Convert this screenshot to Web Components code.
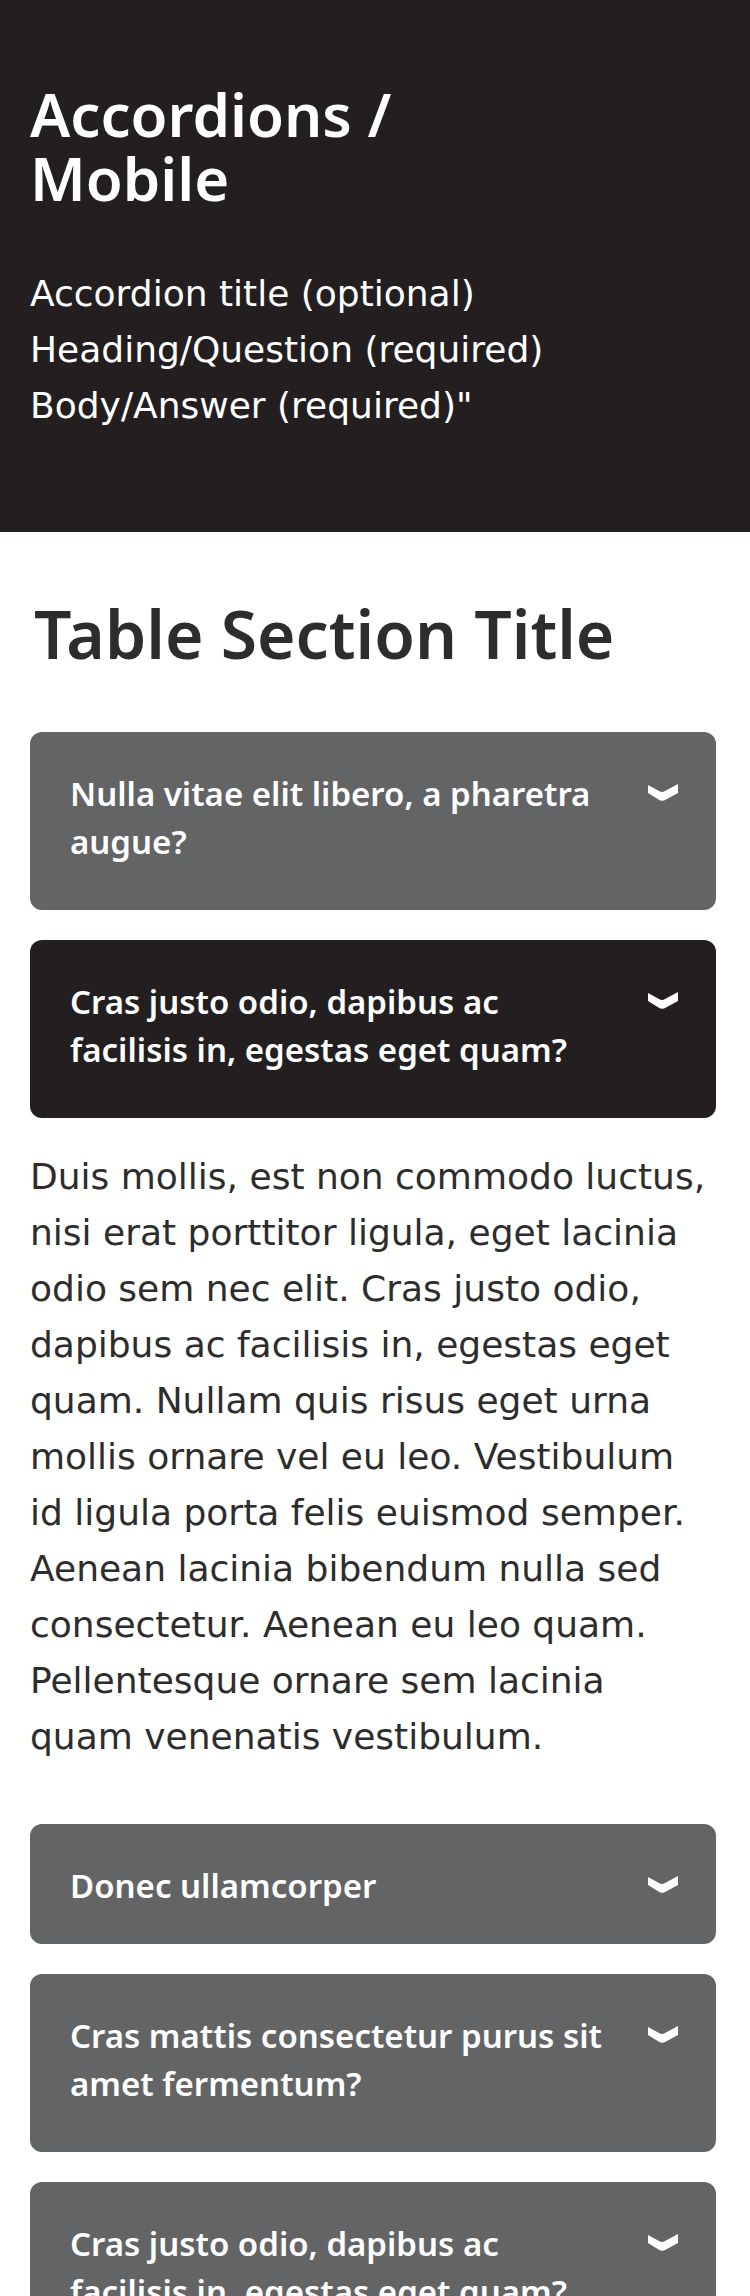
<!DOCTYPE html>
<html lang="en">
<head>
<meta charset="utf-8">
<meta name="viewport" content="width=device-width">
<title>Accordions / Mobile</title>
<style>
  body {
    margin: 0;
    background: #fff;
    color: #2d2d2d;
    --heading: "Noto Sans", "Open Sans", sans-serif;
    --ink: #231f20;
    --grey: #636466;
    font: 36px/56px Verdana, "DejaVu Sans", sans-serif;
  }
</style>
</head>
<body>
<page-hero>
  <span slot="title">Accordions /<br>Mobile</span>
  Accordion title (optional)<br>Heading/Question (required)<br>Body/Answer (required)"
</page-hero>
<accordion-group>
  <span slot="title">Table Section Title</span>
  <accordion-item size="tall"><span slot="heading">Nulla vitae elit libero, a pharetra augue?</span></accordion-item>
  <accordion-item size="tall" open><span slot="heading">Cras justo odio, dapibus ac facilisis in, egestas eget quam?</span>Duis mollis, est non commodo luctus, nisi erat porttitor ligula, eget lacinia odio sem nec elit. Cras justo odio, dapibus ac facilisis in, egestas eget quam. Nullam quis risus eget urna mollis ornare vel eu leo. Vestibulum id ligula porta felis euismod semper. Aenean lacinia bibendum nulla sed consectetur. Aenean eu leo quam. Pellentesque ornare sem lacinia quam venenatis vestibulum.</accordion-item>
  <accordion-item><span slot="heading">Donec ullamcorper</span></accordion-item>
  <accordion-item size="tall"><span slot="heading">Cras mattis consectetur purus sit amet fermentum?</span></accordion-item>
  <accordion-item size="tall"><span slot="heading">Cras justo odio, dapibus ac facilisis in, egestas eget quam?</span></accordion-item>
</accordion-group>

<template id="hero">
  <style>
    :host { display: block; padding: 82px 30px 98px; background: var(--ink); color: #fff; }
    h1 { margin: 0 0 56px; font: 600 60px/64px var(--heading); }
    p { margin: 0; }
  </style>
  <header>
    <h1><slot name="title"></slot></h1>
    <p><slot></slot></p>
  </header>
</template>

<template id="group">
  <style>
    :host { display: block; padding: 61px 34px 30px 30px; }
    h2 { margin: 0 0 59px; padding-left: 4px; font: 600 66px/80px var(--heading); }
    .items { display: flex; flex-direction: column; gap: 30px; }
  </style>
  <section>
    <h2><slot name="title"></slot></h2>
    <div class="items"><slot></slot></div>
  </section>
</template>

<template id="item">
  <style>
    :host { display: block; }
    h3 { margin: 0; }
    button {
      display: flex; align-items: flex-start; gap: 28px;
      box-sizing: border-box; width: 100%; min-height: 120px;
      margin: 0; padding: 38px 38px 34px 40px;
      border: 0; border-radius: 12px;
      background: var(--grey); color: #fff; text-align: left;
      font: 600 33px/48px var(--heading); cursor: pointer;
    }
    :host([size="tall"]) button { min-height: 178px; }
    :host([open]) button { background: var(--ink); }
    .label { flex: 1; }
    svg { flex: none; margin-top: 14px; }
    .panel { padding: 31px 0 29px; }
    .panel[hidden] { display: none; }
  </style>
  <h3><button type="button" aria-controls="panel">
    <span class="label"><slot name="heading"></slot></span>
    <svg width="30" height="17" viewBox="0 0 30 17" fill="#fff" aria-hidden="true"><path d="M0 1 11 7Q14 9 17 7L30 0V9L18 15.500Q14 18 10.500 15.500L0 9Z"/></svg>
  </button></h3>
  <div class="panel" id="panel"><slot></slot></div>
</template>

<script>
  const stamp = (host, id) => host.attachShadow({ mode: "open" })
    .append(document.getElementById(id).content.cloneNode(true));

  customElements.define("page-hero", class extends HTMLElement {
    constructor() { super(); stamp(this, "hero"); }
  });

  customElements.define("accordion-group", class extends HTMLElement {
    constructor() { super(); stamp(this, "group"); }
  });

  customElements.define("accordion-item", class extends HTMLElement {
    static observedAttributes = ["open"];
    constructor() {
      super();
      stamp(this, "item");
      this.shadowRoot.querySelector("button")
        .addEventListener("click", () => this.toggleAttribute("open"));
    }
    connectedCallback() { this.update(); }
    attributeChangedCallback() { this.update(); }
    update() {
      const open = this.hasAttribute("open");
      this.shadowRoot.querySelector("button").setAttribute("aria-expanded", open);
      this.shadowRoot.querySelector(".panel").hidden = !open;
    }
  });
</script>
</body>
</html>
